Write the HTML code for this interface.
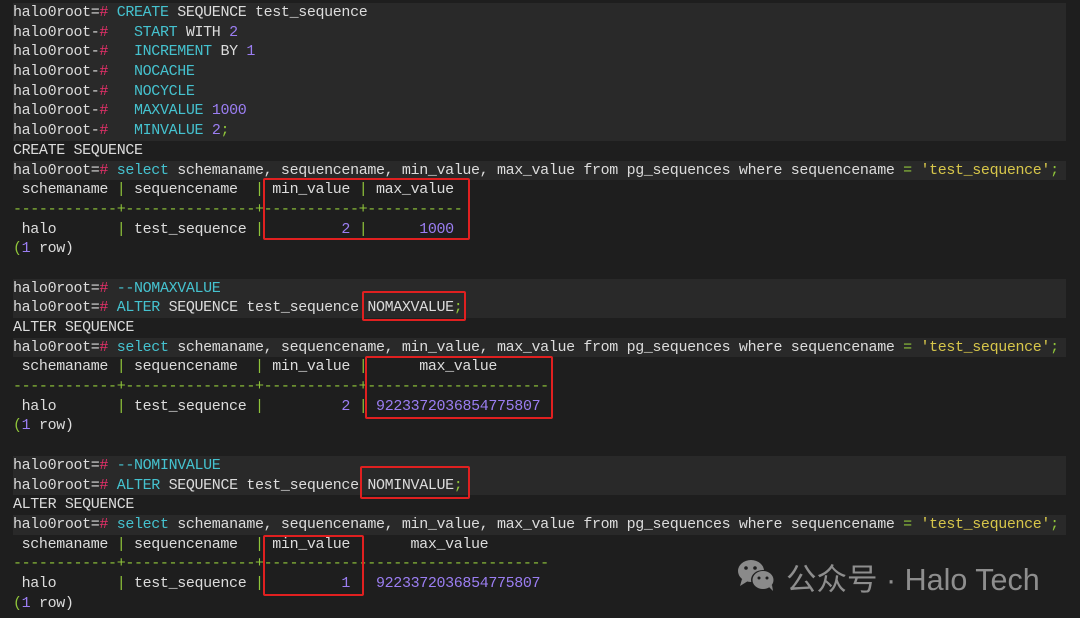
<!DOCTYPE html>
<html><head><meta charset="utf-8"><style>
html,body{margin:0;padding:0;background:#1e1e1e;width:1080px;height:618px;overflow:hidden}
#t{position:absolute;left:0;top:3px;width:1080px}
.l{height:19.7px;line-height:19.7px;padding-left:13px;white-space:pre;font-family:"Liberation Mono",monospace;font-size:15px;letter-spacing:-0.36px;color:#dcdcdc}
.h{background:linear-gradient(to right,#1e1e1e 13px,#292929 13px,#292929 1066px,#1e1e1e 1066px)}
.p{color:#e8306a}.k{color:#45c2cf}.n{color:#9b7ef2}.g{color:#8fc43a}.s{color:#d7c64a}
.box{position:absolute;border:2px solid #e02020;border-radius:2px;box-sizing:border-box}
.wm{position:absolute;left:786px;top:555px;font-family:"Liberation Sans","Noto Sans CJK SC",sans-serif;font-size:30.5px;color:#8e8e8e;white-space:pre}
</style></head><body>
<div id="t">
<div class="l h">halo0root=<span class="p">#</span> <span class="k">CREATE</span> SEQUENCE test_sequence</div>
<div class="l h">halo0root-<span class="p">#</span>   <span class="k">START</span> WITH <span class="n">2</span></div>
<div class="l h">halo0root-<span class="p">#</span>   <span class="k">INCREMENT</span> BY <span class="n">1</span></div>
<div class="l h">halo0root-<span class="p">#</span>   <span class="k">NOCACHE</span></div>
<div class="l h">halo0root-<span class="p">#</span>   <span class="k">NOCYCLE</span></div>
<div class="l h">halo0root-<span class="p">#</span>   <span class="k">MAXVALUE</span> <span class="n">1000</span></div>
<div class="l h">halo0root-<span class="p">#</span>   <span class="k">MINVALUE</span> <span class="n">2</span><span class="g">;</span></div>
<div class="l">CREATE SEQUENCE</div>
<div class="l h">halo0root=<span class="p">#</span> <span class="k">select</span> schemaname, sequencename, min_value, max_value from pg_sequences where sequencename <span class="g">=</span> <span class="s">'test_sequence'</span><span class="g">;</span></div>
<div class="l"> schemaname <span class="g">|</span> sequencename  <span class="g">|</span> min_value <span class="g">|</span> max_value</div>
<div class="l g">------------+---------------+-----------+-----------</div>
<div class="l"> halo       <span class="g">|</span> test_sequence <span class="g">|</span>         <span class="n">2</span> <span class="g">|</span>      <span class="n">1000</span></div>
<div class="l"><span class="g">(</span><span class="n">1</span> row)</div>
<div class="l"> </div>
<div class="l h">halo0root=<span class="p">#</span> <span class="k">--NOMAXVALUE</span></div>
<div class="l h">halo0root=<span class="p">#</span> <span class="k">ALTER</span> SEQUENCE test_sequence NOMAXVALUE<span class="g">;</span></div>
<div class="l">ALTER SEQUENCE</div>
<div class="l h">halo0root=<span class="p">#</span> <span class="k">select</span> schemaname, sequencename, min_value, max_value from pg_sequences where sequencename <span class="g">=</span> <span class="s">'test_sequence'</span><span class="g">;</span></div>
<div class="l"> schemaname <span class="g">|</span> sequencename  <span class="g">|</span> min_value <span class="g">|</span>      max_value</div>
<div class="l g">------------+---------------+-----------+---------------------</div>
<div class="l"> halo       <span class="g">|</span> test_sequence <span class="g">|</span>         <span class="n">2</span> <span class="g">|</span> <span class="n">9223372036854775807</span></div>
<div class="l"><span class="g">(</span><span class="n">1</span> row)</div>
<div class="l"> </div>
<div class="l h">halo0root=<span class="p">#</span> <span class="k">--NOMINVALUE</span></div>
<div class="l h">halo0root=<span class="p">#</span> <span class="k">ALTER</span> SEQUENCE test_sequence NOMINVALUE<span class="g">;</span></div>
<div class="l">ALTER SEQUENCE</div>
<div class="l h">halo0root=<span class="p">#</span> <span class="k">select</span> schemaname, sequencename, min_value, max_value from pg_sequences where sequencename <span class="g">=</span> <span class="s">'test_sequence'</span><span class="g">;</span></div>
<div class="l"> schemaname <span class="g">|</span> sequencename  <span class="g">|</span> min_value       max_value</div>
<div class="l g">------------+---------------+---------------------------------</div>
<div class="l"> halo       <span class="g">|</span> test_sequence <span class="g">|</span>         <span class="n">1</span>   <span class="n">9223372036854775807</span></div>
<div class="l"><span class="g">(</span><span class="n">1</span> row)</div>
</div>
<div class="box" style="left:263px;top:178px;width:207px;height:62px"></div>
<div class="box" style="left:362px;top:291px;width:104px;height:30px"></div>
<div class="box" style="left:365px;top:356px;width:188px;height:63px"></div>
<div class="box" style="left:360px;top:466px;width:110px;height:33px"></div>
<div class="box" style="left:263px;top:535px;width:101px;height:61px"></div>
<svg style="position:absolute;left:736px;top:558px" width="42" height="34" viewBox="0 0 42 34">
<ellipse cx="15" cy="13" rx="13" ry="11" fill="#8a8a8a"/>
<path d="M6 21 L4 28 L12 23Z" fill="#8a8a8a"/>
<ellipse cx="27" cy="22" rx="12" ry="10" fill="#1e1e1e"/>
<ellipse cx="27" cy="22" rx="10.5" ry="9" fill="#8a8a8a"/>
<path d="M33 29 L37 33 L36 27Z" fill="#8a8a8a"/>
<circle cx="10" cy="10" r="1.8" fill="#1e1e1e"/><circle cx="19" cy="10" r="1.8" fill="#1e1e1e"/>
<circle cx="23" cy="20" r="1.5" fill="#1e1e1e"/><circle cx="31" cy="20" r="1.5" fill="#1e1e1e"/>
</svg>
<div class="wm">公众号 · Halo Tech</div>
</body></html>
